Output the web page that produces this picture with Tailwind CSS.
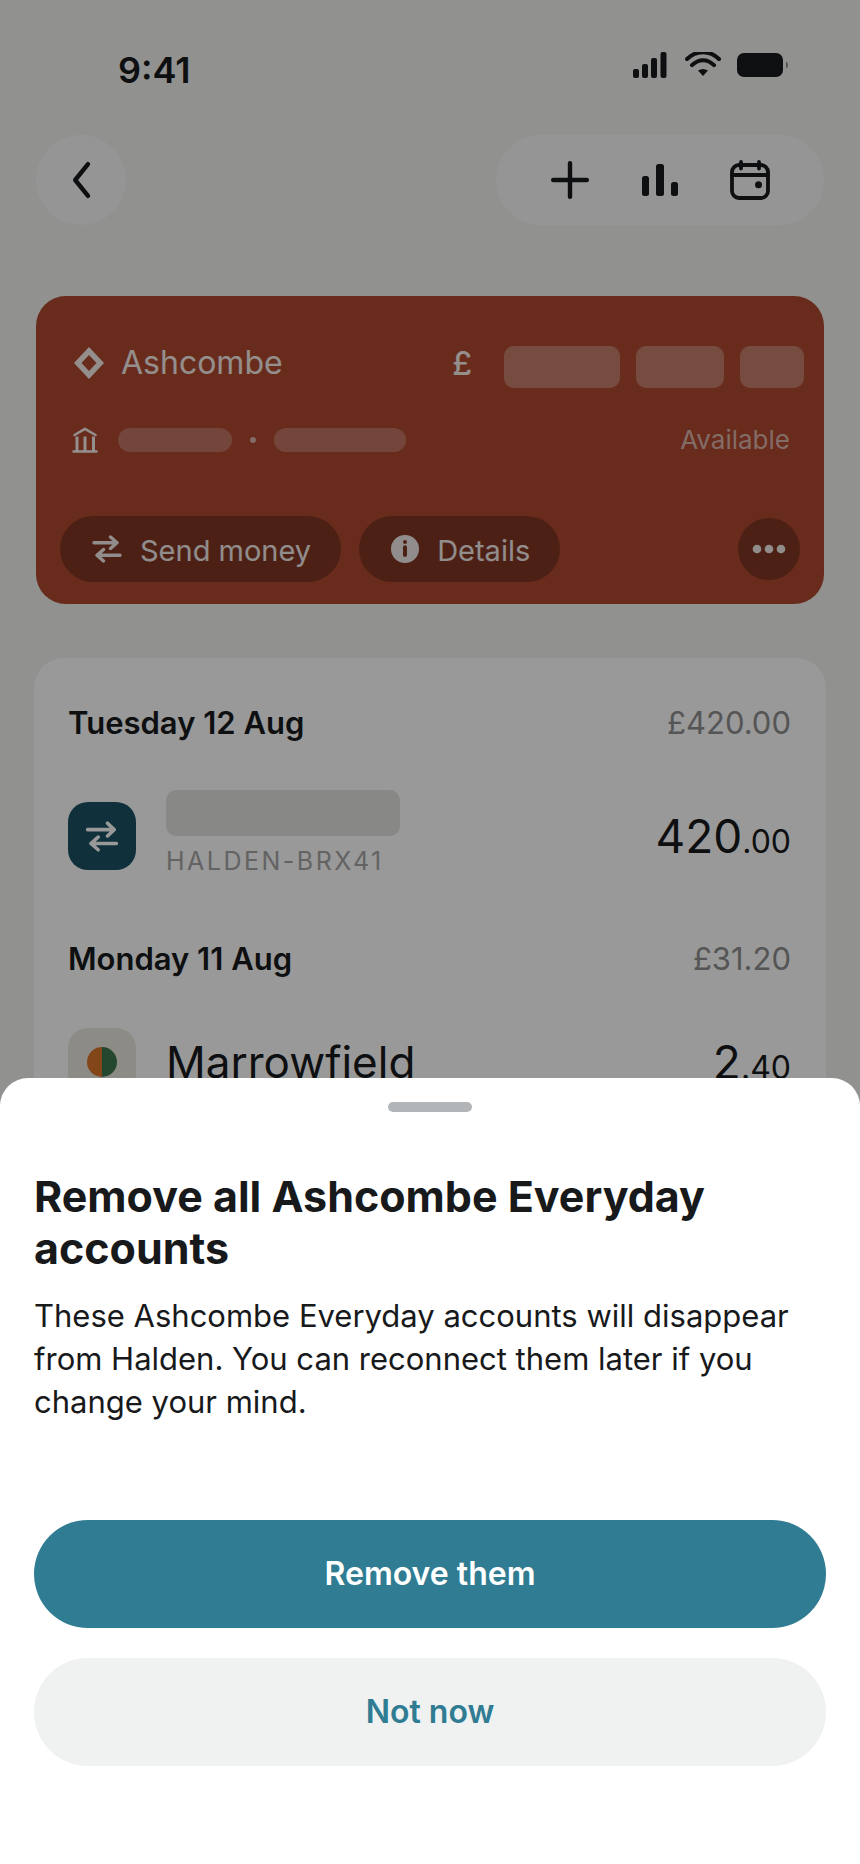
<!DOCTYPE html>
<html lang="en">
<head>
<meta charset="utf-8">
<meta name="viewport" content="width=device-width, initial-scale=1">
<title>Remove accounts</title>
<script src="https://cdn.jsdelivr.net/npm/@tailwindcss/browser@4"></script>
</head>
<body class="bg-[#f2f2ef] font-['Inter',sans-serif] text-[#17191b]">
<div class="flex min-h-screen flex-col px-[34px]">
  <!-- Status bar -->
  <header class="flex items-start justify-between pt-[52px] pr-[37px] pl-[84px]">
    <p class="text-[36px] leading-[36px] font-semibold">9:41</p>
    <div class="flex gap-4">
      <svg class="h-[26px] w-[36px]" viewBox="0 0 36 26" fill="currentColor" aria-label="Signal" role="img"><rect y="17" width="6" height="9" rx="2"/><rect x="9" y="12" width="6" height="14" rx="2"/><rect x="18" y="6" width="6" height="20" rx="2"/><rect x="27.500" y="0" width="6" height="26" rx="2"/></svg>
      <svg class="h-[26px] w-[36px]" viewBox="0 0 36 26" fill="none" stroke="currentColor" stroke-width="4" stroke-linecap="round" aria-label="Wi-Fi" role="img"><path d="M2 7Q9 .2 18 .2T34 7M7 13.200Q12 8.200 18 8.200T29 13.200"/><path d="M13 18.500Q18 15.500 23 18.500L18 24Z" fill="currentColor" stroke="none"/></svg>
      <svg class="h-[26px] w-[52px]" viewBox="0 0 52 26" fill="currentColor" aria-label="Battery full" role="img"><rect x="0" y="1" width="46" height="24" rx="7"/><path d="M49 9.500q2 1 2 3.500t-2 3.500z" opacity=".5"/></svg>
    </div>
  </header>

  <!-- Navigation -->
  <nav class="mx-[2px] mt-[47px] flex justify-between">
    <button type="button" aria-label="Back" class="flex size-[90px] items-center justify-center rounded-full bg-[#f9f9f9]">
      <svg class="size-[40px]" viewBox="0 0 40 40" fill="none" stroke="currentColor" stroke-width="4.400" stroke-linecap="round" stroke-linejoin="round"><path d="M27 4.200L14.200 20L27 35.800"/></svg>
    </button>
    <div class="flex h-[90px] items-center gap-[50px] rounded-full bg-[#f9f9f9] px-[54px]">
      <button type="button" aria-label="Add"><svg class="size-[40px]" viewBox="0 0 40 40" fill="none" stroke="currentColor" stroke-width="4.400" stroke-linecap="round"><path d="M20 3.200V36.800M3.200 20H36.800"/></svg></button>
      <button type="button" aria-label="Insights"><svg class="size-[40px]" viewBox="0 0 40 40" fill="currentColor"><rect x="2" y="16" width="7" height="20" rx="2.500"/><rect x="16" y="4" width="8" height="32" rx="2.500"/><rect x="31" y="22" width="7" height="14" rx="2.500"/></svg></button>
      <button type="button" aria-label="Calendar"><svg class="size-[40px]" viewBox="0 0 40 40" fill="none" stroke="currentColor" stroke-width="3.800" stroke-linecap="round"><rect x="2" y="5" width="36" height="33" rx="7"/><path d="M2 15H38M11 2V8.500M29 2V8.500"/><circle cx="28.500" cy="24.800" r="3.500" fill="currentColor" stroke="none"/></svg></button>
    </div>
  </nav>

  <!-- Account card -->
  <section class="mx-[2px] mt-[71px] rounded-[30px] bg-[#ad482f] pb-[22px] text-white/90" aria-label="Ashcombe account">
    <div class="flex items-start pt-[50px] pr-[20px] pl-[38px]">
      <svg class="h-[34px] w-[32px]" viewBox="0 0 32 34" fill="currentColor"><path fill-rule="evenodd" d="M15 1L30 17L15 33L0 17ZM15 9L7.500 17L15 25L22.500 17Z"/></svg>
      <h2 class="ml-[15px] grow text-[32px] leading-[34px]">Ashcombe</h2>
      <span class="mr-[32px] text-[32px] leading-[36px] font-medium">£</span>
      <div class="flex gap-4">
        <span class="h-[42px] w-[116px] rounded-[10px] bg-white/30"></span>
        <span class="h-[42px] w-[88px] rounded-[10px] bg-white/30"></span>
        <span class="h-[42px] w-[64px] rounded-[10px] bg-white/30"></span>
      </div>
    </div>
    <div class="mt-[36px] flex h-[32px] items-center pr-[34px] pl-[36px]">
      <svg class="h-[26px] w-[26px]" viewBox="0 0 26 26" fill="none" stroke="currentColor" stroke-width="2.600" stroke-linecap="round" stroke-linejoin="round"><path d="M2.500 8L13 1.800L23.500 8M1.500 24.500H24.500"/><path stroke-width="3" stroke-linecap="butt" d="M5 9.500V24M13 9.500V24M21.500 9.500V24"/></svg>
      <span class="ml-[20px] h-[24px] w-[114px] rounded-full bg-white/25"></span>
      <span class="ml-[18px] size-[6px] rounded-full bg-white/60"></span>
      <span class="ml-[18px] h-[24px] w-[132px] rounded-full bg-white/25"></span>
      <span class="ml-auto text-[26px] leading-[32px] text-white/60">Available</span>
    </div>
    <div class="mt-[60px] flex items-center gap-[18px] px-[24px]">
      <button type="button" class="flex h-[66px] items-center gap-[18px] rounded-full bg-black/25 pr-[30px] pl-[32px] text-[29px]">
        <svg class="h-[28px] w-[30px]" viewBox="0 0 30 28" fill="none" stroke="currentColor" stroke-width="3.400" stroke-linecap="round" stroke-linejoin="round"><path d="M2 7.800H25M18.500 2L25 7.800L18.500 13.500M28 20.300H5M11.500 14.500L5 20.300L11.500 26"/></svg>
        <span class="pt-[3px]">Send money</span>
      </button>
      <button type="button" class="flex h-[66px] items-center gap-[18px] rounded-full bg-black/25 pr-[30px] pl-[32px] text-[29px]">
        <svg class="size-[28px]" viewBox="0 0 28 28" fill="currentColor"><path fill-rule="evenodd" d="M14 0a14 14 0 1 0 0 28a14 14 0 0 0 0-28ZM14 5a2 2 0 1 1 0 4a2 2 0 0 1 0-4ZM12 12.200a2 2 0 0 1 4 0V20a2 2 0 0 1-4 0Z"/></svg>
        <span class="pt-[3px]">Details</span>
      </button>
      <button type="button" aria-label="More" class="ml-auto flex size-[62px] items-center justify-center rounded-full bg-black/25">
        <svg class="h-[10px] w-[34px]" viewBox="0 0 34 10" fill="currentColor"><circle cx="5" cy="5" r="4.300"/><circle cx="17" cy="5" r="4.300"/><circle cx="29" cy="5" r="4.300"/></svg>
      </button>
    </div>
  </section>

  <!-- Transactions -->
  <main class="mt-[54px] grow rounded-t-[30px] bg-white pt-[45px] pr-[35px] pl-[34px]">
    <div class="flex items-center justify-between text-[31px] leading-[40px]">
      <h3 class="font-semibold">Tuesday 12 Aug</h3>
      <p class="text-[#8e8e8e]">£420.00</p>
    </div>
    <div class="mt-[47px] flex items-start">
      <span class="mt-3 flex size-[68px] items-center justify-center rounded-[20px] bg-[#1b5263] text-white">
        <svg class="h-[31px] w-[34px]" viewBox="0 0 30 28" fill="none" stroke="currentColor" stroke-width="3.200" stroke-linecap="round" stroke-linejoin="round"><path d="M2 7.800H26M20 2L26 7.800L20 13.500M28 20.300H5M11.500 14.500L5 20.300L11.500 26"/></svg>
      </span>
      <div class="ml-[30px] grow">
        <div class="h-[46px] w-[234px] rounded-[10px] bg-[#e3e3e0]"></div>
        <p class="mt-[10px] text-[25px] leading-[30px] tracking-widest text-[#a6a6a6]">HALDEN-BRX41</p>
      </div>
      <p class="mt-3 text-[46px] leading-[68px]">420<span class="text-[32px]">.00</span></p>
    </div>
    <div class="mt-[63px] flex items-center justify-between text-[31px] leading-[40px]">
      <h3 class="font-semibold">Monday 11 Aug</h3>
      <p class="text-[#8e8e8e]">£31.20</p>
    </div>
    <div class="mt-[49px] flex items-start">
      <span class="flex size-[68px] items-center justify-center rounded-[20px] bg-[#ece8de]">
        <svg class="size-[30px]" viewBox="0 0 30 30"><path fill="#d9762b" d="M15 0a15 15 0 0 0 0 30Z"/><path fill="#3d774c" d="M15 0a15 15 0 0 1 0 30Z"/></svg>
      </span>
      <p class="ml-[30px] grow text-[44px] leading-[68px]">Marrowfield</p>
      <p class="text-[46px] leading-[68px]">2<span class="text-[32px]">.40</span></p>
    </div>
  </main>
</div>

<div class="fixed inset-0 bg-black/40"></div>

<!-- Confirmation sheet -->
<div role="dialog" aria-modal="true" aria-labelledby="sheet-title" class="fixed inset-x-0 bottom-0 rounded-t-[28px] bg-white px-[34px] pt-[24px] pb-[98px]">
  <div class="mx-auto h-[10px] w-[84px] rounded-full bg-[#b2b5b7]"></div>
  <h1 id="sheet-title" class="mt-[58px] text-[43px] leading-[52px] font-bold">Remove all Ashcombe Everyday accounts</h1>
  <p class="mt-[20px] text-[31px] leading-[43px]">These Ashcombe Everyday accounts will disappear from Halden. You can reconnect them later if you change your mind.</p>
  <div class="mt-[97px] flex flex-col gap-[30px] text-[32px] font-semibold">
    <button type="button" class="h-[108px] rounded-full bg-[#2f7c93] text-white">Remove them</button>
    <button type="button" class="h-[108px] rounded-full bg-[#eff2f1] text-[#2f7c93]">Not now</button>
  </div>
</div>
</body>
</html>
